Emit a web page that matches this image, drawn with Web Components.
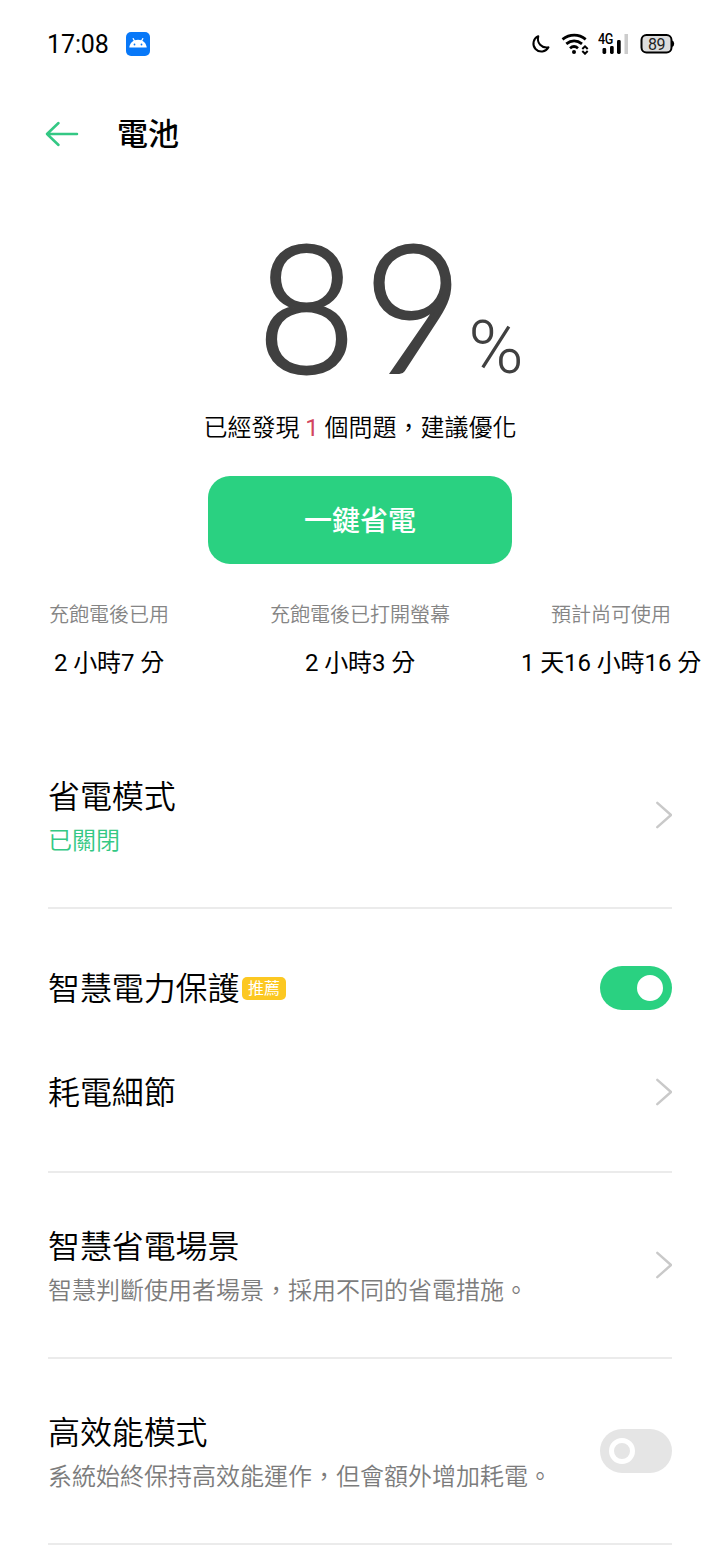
<!DOCTYPE html>
<html lang="zh-Hant">
<head>
<meta charset="utf-8">
<title>電池</title>
<style>
html,body{margin:0;padding:0;background:#fff}
body{width:720px;height:1560px;overflow:hidden;color:#000;font-family:Roboto,"Noto Sans CJK TC",sans-serif}
</style>
</head>
<body>
<battery-page></battery-page>
<script>
function define(name, html){
  const t=document.createElement('template');
  t.innerHTML=html;
  customElements.define(name,class extends HTMLElement{
    constructor(){super();this.attachShadow({mode:'open'}).appendChild(t.content.cloneNode(true));}
  });
}

define('status-bar',`<style>
:host{display:flex;height:88px;align-items:center;justify-content:space-between;padding:0 45px 0 47px;box-sizing:border-box}
.l,.r{display:flex;align-items:center}
.t{font-size:25px;line-height:30px;width:79px;white-space:nowrap;padding-top:1px;letter-spacing:-.1px}
svg{display:block}
.net{display:flex;position:relative}
.g{position:absolute;left:0;top:0;font-size:14px;line-height:13px;font-weight:500;letter-spacing:-.5px;transform:scaleX(.9);transform-origin:0 0}
.bat{width:35px;height:22px;display:grid}
.bat>*{grid-area:1/1}
.bat span{font-size:16px;line-height:23px;width:33px;text-align:center;color:#222;letter-spacing:-.4px}
</style>
<div class="l"><span class="t">17:08</span>
<svg width="24" height="24" viewBox="0 0 24 24"><rect width="24" height="24" rx="5" fill="#0878f8"/><path d="M3.3 15.6C3.7 10.8 7.2 7.700 12 7.700s8.300 3.100 8.700 7.900z" fill="#fff"/><path d="M8.500 9 7.200 6.600M15.500 9l1.300-2.400" stroke="#fff" stroke-width="1.200" stroke-linecap="round"/><circle cx="8.500" cy="12.500" r=".9" fill="#0878f8"/><circle cx="15.500" cy="12.500" r=".9" fill="#0878f8"/></svg></div>
<div class="r">
<svg width="30" height="22" viewBox="530 33 30 22"><path d="M538.300 36.200A8 8 0 1 0 548.500 47.300C541.500 48.600 536.600 43 538.300 36.200Z" fill="none" stroke="#000" stroke-width="2" stroke-linejoin="round"/></svg>
<svg width="38" height="22" viewBox="560 33 38 22" fill="none" stroke="#000"><path d="M562.500 39.300c7.300-5.500 16.300-5.500 23.200 0M566.300 43.900c4.800-3.900 10.800-3.900 15.700 0M570 48.200c2.500-2.100 5.500-2.100 8 0" stroke-width="2.800"/><circle cx="574" cy="52" r="2" fill="#000" stroke="none"/><path d="m582.300 49 2.700-2.700 2.700 2.700M582.300 51l2.700 2.700 2.700-2.700" stroke-width="2"/></svg>
<div class="net"><svg width="42" height="22" viewBox="598 33 42 22"><rect x="602.500" y="48" width="3.700" height="6" rx="1.400"/><rect x="610" y="46" width="3.700" height="8" rx="1.400"/><rect x="617" y="40" width="3.700" height="14" rx="1.400"/><rect x="624.500" y="34" width="3.500" height="20" fill="#ccc"/></svg><span class="g">4G</span></div>
<div class="bat"><svg width="35" height="22" viewBox="640 33 35 22"><rect x="641.500" y="35" width="30" height="17.500" rx="5" fill="#ddd" stroke="#000" stroke-width="2"/><path d="M672 40.500q2.200.5 2.200 3.300t-2.200 3.300z"/></svg><span>89</span></div>
</div>`);

define('app-bar',`<style>
:host{display:flex;height:92px;align-items:center;padding-left:45px}
svg{display:block;width:73px}
h1{margin:0;font-size:31px;line-height:44px;font-weight:500;padding-top:2px;margin-left:-1px}
</style><svg width="73" height="28" viewBox="0 0 73 28"><path d="M32 14H2M13.500 3 2 14l11.500 11" fill="none" stroke="#34c884" stroke-width="2.500" stroke-linecap="round" stroke-linejoin="round"/></svg><h1><slot></slot></h1>`);

define('charge-level',`<style>
:host{display:flex;height:220px;box-sizing:border-box;padding:35px 0 0 257px;align-items:baseline;color:#404040;font-family:Lato,sans-serif;font-weight:300;white-space:nowrap}
.n{font-size:177px;line-height:180px;letter-spacing:8px;-webkit-text-stroke:3px #404040;transform:scaleX(.965);transform-origin:0 0}
.p{font-size:75px;line-height:80px;font-family:Roboto,sans-serif;font-weight:300;margin-left:-10px}
</style><span class="n"><slot></slot></span><span class="p">%</span>`);

define('issue-note',`<style>
:host{display:block;height:56px;line-height:56px;font-size:24px;text-align:center;font-family:Roboto,"Noto Sans CJK TC",sans-serif;font-weight:350;white-space:nowrap}
::slotted(b){color:#d24560;font-weight:400}
</style><slot></slot>`);

define('save-button',`<style>
:host{display:flex;margin:20px auto 0;width:304px;height:88px;border-radius:22px;background:#2ad181;color:#fff;align-items:center;justify-content:center;font-size:28px;line-height:40px;font-weight:500;padding-top:4px;box-sizing:border-box}
</style><slot></slot>`);

define('stat-row',`<style>:host{display:flex;justify-content:space-between;padding:34px 49px 0;height:125px}</style><slot></slot>`);
define('stat-item',`<style>
:host{display:flex;flex-direction:column;align-items:center;white-space:nowrap}
.k{font-size:20px;line-height:34px;color:#858585;font-weight:350}
.v{font-size:24px;line-height:36px;margin-top:13px;width:0;display:flex;justify-content:center;letter-spacing:-.1px}
</style><span class="k"><slot name="label"></slot></span><span class="v"><slot></slot></span>`);

define('setting-row',`<style>
:host{display:flex;height:184px;padding:0 48px;align-items:center;justify-content:space-between}
:host([compact]){height:104px}
.x{display:flex;flex-direction:column;padding-top:4px}
:host([compact]) .x{padding-top:0}
.h{display:flex;align-items:center;font-size:32px;line-height:48px;font-weight:350;letter-spacing:-.1px}
:host([compact]) .h ::slotted([slot=title]){padding-top:2px}
.s{font-size:24px;line-height:40px;color:var(--sub,#7c7c7c);font-weight:350}
</style><div class="x"><div class="h"><slot name="title"></slot><slot name="tag"></slot></div><div class="s"><slot name="sub"></slot></div></div><slot></slot>`);

define('tag-badge',`<style>:host{display:flex;width:44px;height:23px;border-radius:5px;background:#fcc822;color:#fff;font-size:16px;line-height:23px;margin-left:2.600px;justify-content:center;font-weight:400}</style><slot></slot>`);
define('chevron-icon',`<style>:host,svg{display:block}</style><svg width="17" height="28" viewBox="0 0 17 28"><path d="M2.300 1.800 16 14 2.300 26.200" fill="none" stroke="#c9c9c9" stroke-width="2.400" stroke-linecap="round" stroke-linejoin="round"/></svg>`);
define('toggle-switch',`<style>
:host{display:flex;box-sizing:border-box;width:72px;height:44px;border-radius:22px;background:#e5e5e5;padding:9px;align-items:center}
i{display:block;box-sizing:border-box;width:26px;height:26px;border-radius:50%;border:5px solid #fff}
:host([on]){background:#2ad181;justify-content:flex-end}
:host([on]) i{background:#fff}
</style><i></i>`);
define('rule-line',`<style>:host{display:block;height:2px;margin:0 48px;background:#ebebeb}</style>`);
define('row-group',`<style>:host{display:block;padding:27px 0}</style><slot></slot>`);

define('battery-page',`<style>:host{display:block;width:720px}</style>
<status-bar></status-bar>
<app-bar>電池</app-bar>
<charge-level>89</charge-level>
<issue-note>已經發現 <b>1</b> 個問題，建議優化</issue-note>
<save-button>一鍵省電</save-button>
<stat-row>
<stat-item><span slot="label">充飽電後已用</span>2 小時7 分</stat-item>
<stat-item><span slot="label">充飽電後已打開螢幕</span>2 小時3 分</stat-item>
<stat-item><span slot="label">預計尚可使用</span>1 天16 小時16 分</stat-item>
</stat-row>
<setting-row style="--sub:#34c884"><span slot="title">省電模式</span><span slot="sub">已關閉</span><chevron-icon></chevron-icon></setting-row>
<rule-line></rule-line>
<row-group>
<setting-row compact><span slot="title">智慧電力保護</span><tag-badge slot="tag">推薦</tag-badge><toggle-switch on></toggle-switch></setting-row>
<setting-row compact><span slot="title">耗電細節</span><chevron-icon></chevron-icon></setting-row>
</row-group>
<rule-line></rule-line>
<setting-row><span slot="title">智慧省電場景</span><span slot="sub">智慧判斷使用者場景，採用不同的省電措施。</span><chevron-icon></chevron-icon></setting-row>
<rule-line></rule-line>
<setting-row><span slot="title">高效能模式</span><span slot="sub">系統始終保持高效能運作，但會額外增加耗電。</span><toggle-switch></toggle-switch></setting-row>
<rule-line></rule-line>`);
</script>
</body>
</html>
